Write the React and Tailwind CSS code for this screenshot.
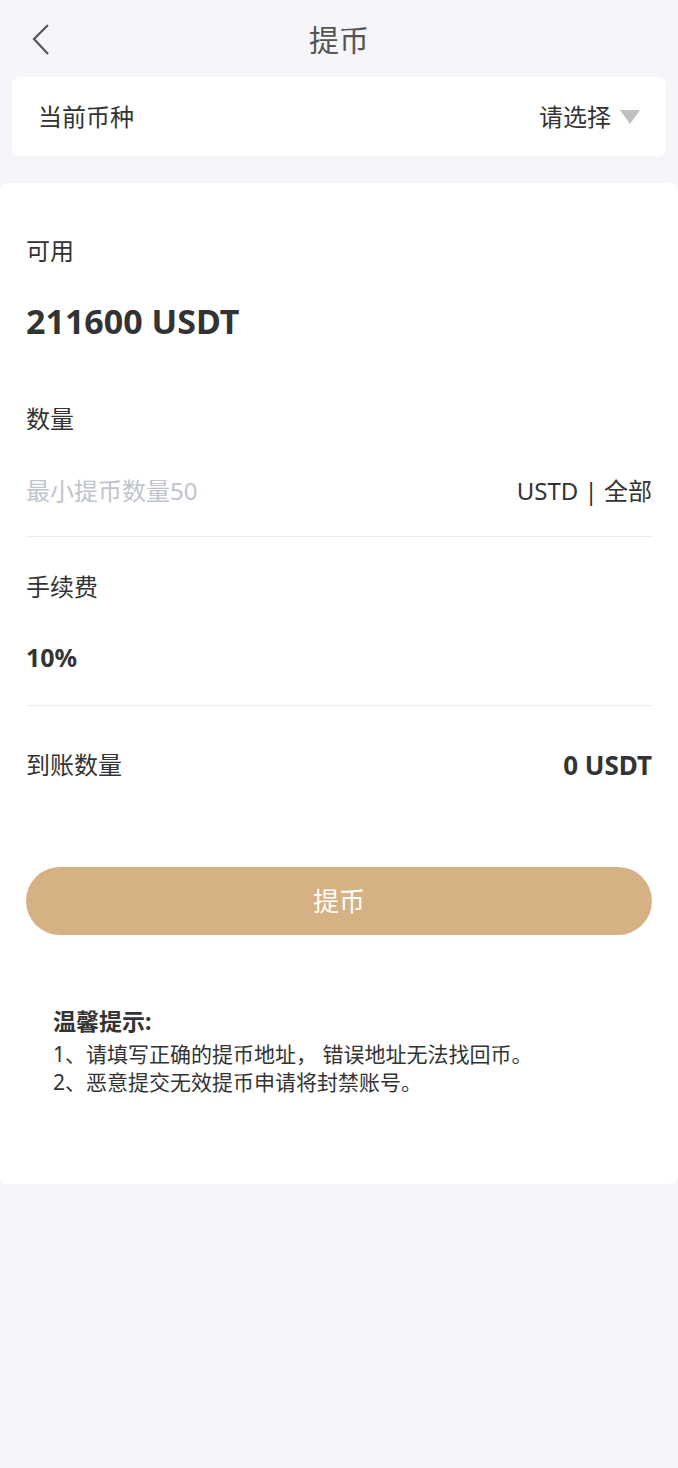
import React from 'react';

const font = { fontFamily: '"Noto Sans", "Noto Sans CJK SC", sans-serif' };

const Divider = () => <div className="h-px bg-[#ebedf0]" />;

const App = () => {
  return (
    <div className="min-h-[1468px] bg-[#f6f6fa] text-[#333]" style={font}>
      {/* header */}
      <div className="relative h-[77px] flex items-center justify-center">
        <button className="absolute left-[26px] top-[18px] p-1">
          <svg width="24" height="36" viewBox="0 0 24 36" fill="none" stroke="#555" strokeWidth="2.2">
            <polyline points="18,3 4,17 18,32" />
          </svg>
        </button>
        <h1 className="text-[30px] text-[#555] leading-none pt-[3px]">提币</h1>
      </div>

      {/* coin select */}
      <div className="mx-3 h-[79px] bg-white rounded-lg px-[26px] flex items-center justify-between">
        <span className="text-[24px]">当前币种</span>
        <div className="flex items-center gap-[9px]">
          <span className="text-[24px]">请选择</span>
          <svg width="20" height="14" viewBox="0 0 20 14">
            <polygon points="0,0 20,0 10,14" fill="#c0c0c0" />
          </svg>
        </div>
      </div>

      {/* form */}
      <div className="mt-[27px] bg-white rounded-lg px-[26px] pt-[46px] pb-[88px]">
        <div className="h-[44px] flex items-center text-[24px]">可用</div>
        <div className="mt-[28px] h-[40px] flex items-center text-[34px] font-bold">211600 USDT</div>

        <div className="mt-[56px] h-[44px] flex items-center text-[24px]">数量</div>
        <div className="mt-[28px] h-[44px] flex items-center justify-between text-[24px]">
          <span className="text-[#c0c4cc]">最小提币数量50</span>
          <span>USTD | 全部</span>
        </div>
        <div className="mt-[23px]">
          <Divider />
        </div>

        <div className="mt-[28px] h-[44px] flex items-center text-[24px]">手续费</div>
        <div className="mt-[29px] h-[40px] flex items-center text-[25px] font-bold">10%</div>
        <div className="mt-[27px]">
          <Divider />
        </div>

        <div className="mt-[37px] h-[44px] flex items-center justify-between">
          <span className="text-[24px]">到账数量</span>
          <span className="text-[26px] font-bold">0 USDT</span>
        </div>

        <button className="mt-[80px] w-full h-[68px] rounded-full bg-[#d6b183] text-white text-[26px]">
          提币
        </button>

        <div className="mt-[72px] px-[27px]">
          <div className="h-[28px] flex items-center text-[23px] font-bold">温馨提示:</div>
          <div className="mt-[5px] text-[21px] leading-[28px]">
            <p>1、请填写正确的提币地址， 错误地址无法找回币。</p>
            <p>2、恶意提交无效提币申请将封禁账号。</p>
          </div>
        </div>
      </div>
    </div>
  );
};

export default App;
